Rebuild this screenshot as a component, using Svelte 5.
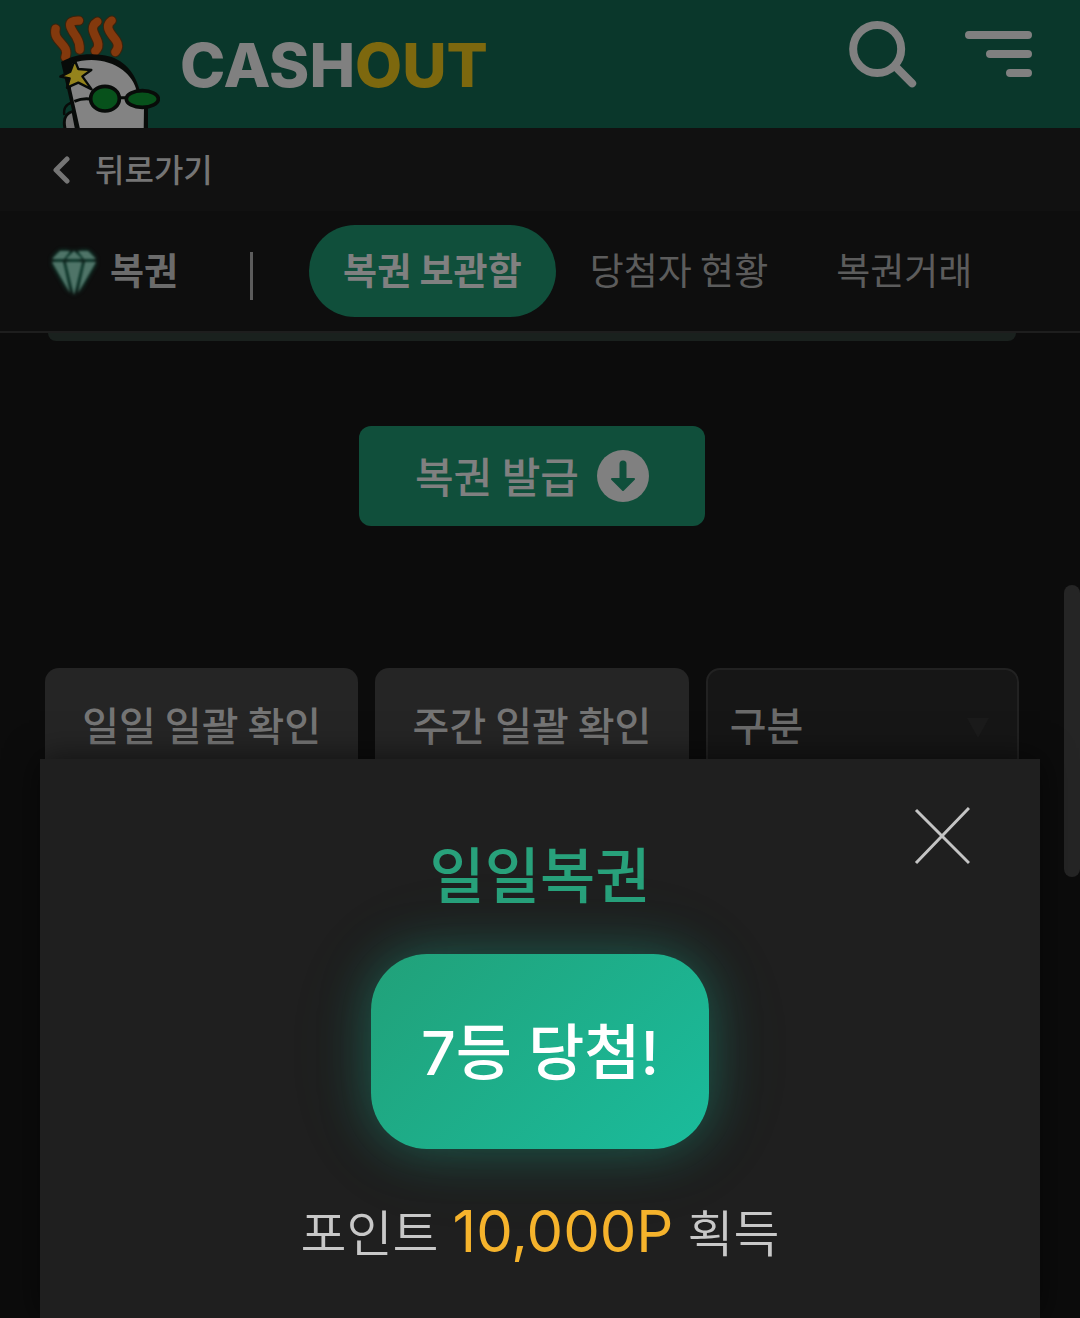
<script lang="ts">
	const tabs = ['복권 보관함', '당첨자 현황', '복권거래'];
	const types = ['구분', '일일', '주간'];

	let activeTab = $state(0);
	let type = $state('구분');
	let open = $state(true);
</script>

<svelte:head>
	<title>CASHOUT</title>
</svelte:head>

<div class="page">
	<header class="header">
		<a class="brand" href="/">
			<svg class="mascot" viewBox="60 45 330 339" aria-hidden="true">
				<g fill="none" stroke-linecap="round" stroke-linejoin="round">
					<g stroke="#3a230d" stroke-width="31">
						<path d="M77 86C66 126 122 132 106 172" />
						<path d="M147 62C100 60 127 92 139 111C148 126 150 137 149 149" />
						<path d="M202 65C175 82 196 105 203 124C208 139 203 147 196 153" />
						<path d="M245 62C221 79 243 102 258 121C268 136 263 148 256 156" />
					</g>
					<g stroke="#83390d" stroke-width="25">
						<path d="M77 86C66 126 122 132 106 172" />
						<path d="M147 62C100 60 127 92 139 111C148 126 150 137 149 149" />
						<path d="M202 65C175 82 196 105 203 124C208 139 203 147 196 153" />
						<path d="M245 62C221 79 243 102 258 121C268 136 263 148 256 156" />
					</g>
				</g>
				<path d="M106 390C98 358 105 340 129 334L140 390Z" fill="#737373" stroke="#080b09" stroke-width="9" />
				<path d="M103 345C99 323 108 313 126 307" fill="none" stroke="#080b09" stroke-width="7" />
				<path d="M93 186L140 392H354V318L328 267C312 208 270 170 216 165C170 158 128 165 93 186Z" fill="#080b09" />
				<path d="M126 190C184 170 240 182 278 210C300 227 314 249 319 270L320 312L342 322L341 392H151L123 266Z" fill="#838383" />
				<path d="M133 304Q160 293 186 298M268 293H297" fill="none" stroke="#080b09" stroke-width="9" />
				<ellipse cx="225" cy="296" rx="43" ry="37" fill="#07511b" stroke="#080b09" stroke-width="11" />
				<ellipse cx="337" cy="297" rx="48" ry="25" fill="#07511b" stroke="#080b09" stroke-width="11" />
				<path d="M134 180L145 207L184 210L157 229L185 268L145 248L111 263L119 235L91 230L121 215Z" fill="#94831c" stroke="#080b09" stroke-width="7" stroke-linejoin="round" />
			</svg>
			<span class="wordmark">CASH<span class="gold">OUT</span></span>
		</a>
		<div class="actions">
			<button class="icon-btn" type="button" aria-label="검색">
				<svg width="69" height="68" viewBox="54 60 206 204" fill="none" stroke="#808080" stroke-width="24" stroke-linecap="round">
					<circle cx="141" cy="147" r="72" />
					<path d="M196 200L246 250" />
				</svg>
			</button>
			<button class="icon-btn" type="button" aria-label="메뉴">
				<svg width="67" height="48" viewBox="0 0 67 48" fill="none" stroke="#808080" stroke-width="8" stroke-linecap="round">
					<path d="M4 5H63M25 24H63M45 43H63" />
				</svg>
			</button>
		</div>
	</header>

	<div class="back-bar">
		<a class="back" href="/">
			<svg width="18" height="28" viewBox="0 0 18 28" fill="none" stroke="#757575" stroke-width="5" stroke-linecap="round" stroke-linejoin="round">
				<path d="M15 3L4 14L15 25" />
			</svg>
			<span class="label">뒤로가기</span>
		</a>
	</div>

	<nav class="nav">
		<div class="section">
			<svg class="gem" width="48" height="52" viewBox="0 0 48 52" aria-hidden="true">
				<g fill="#4f7468">
					<path d="M10 4H20L14 12H2Z" />
					<path d="M24 4L32 12H16Z" />
					<path d="M28 4H38L46 12H34Z" />
					<path d="M2 15H13L20 46Z" />
					<path d="M16 15H32L24 48Z" />
					<path d="M35 15H46L28 46Z" />
				</g>
			</svg>
			<strong class="label">복권</strong>
		</div>
		<span class="divider"></span>
		<div class="tabs">
			{#each tabs as tab, i}
				<button class="tab" class:active={activeTab === i} type="button" onclick={() => (activeTab = i)}>{tab}</button>
			{/each}
		</div>
	</nav>

	<main class="content">
		<div class="card-end"></div>
		<button class="issue" type="button">
			<span class="label">복권 발급</span>
			<svg width="52" height="52" viewBox="0 0 52 52" aria-hidden="true">
				<circle cx="26" cy="26" r="26" fill="#808080" />
				<path d="M26 14V32" stroke="#104f3b" stroke-width="7" stroke-linecap="round" />
				<path d="M15 29H37L26 40Z" fill="#104f3b" stroke="#104f3b" stroke-width="2" stroke-linejoin="round" />
			</svg>
		</button>
		<div class="filters">
			<button class="filter" type="button">일일 일괄 확인</button>
			<button class="filter" type="button">주간 일괄 확인</button>
			<div class="select-wrap">
				<select class="select" aria-label="구분" bind:value={type}>
					{#each types as t}
						<option>{t}</option>
					{/each}
				</select>
				<svg class="caret" width="22" height="20" viewBox="0 0 22 20" aria-hidden="true">
					<path d="M0 0H22L11 20Z" fill="#1b1b1b" />
				</svg>
			</div>
		</div>
	</main>

	<div class="scroll-thumb"></div>

	{#if open}
		<div class="overlay">
			<div class="modal" role="dialog" aria-labelledby="modal-title">
				<button class="close" type="button" aria-label="닫기" onclick={() => (open = false)}>
					<svg width="56" height="58" viewBox="0 0 56 58" fill="none" stroke="#c4c4c4" stroke-width="3">
						<path d="M2 3L55 56M55 1L2 56" />
					</svg>
				</button>
				<h2 id="modal-title">일일복권</h2>
				<div class="prize">7등 당첨!</div>
				<p class="points">포인트 <span class="amount">10,000P</span> 획득</p>
			</div>
		</div>
	{/if}
</div>

<style>
	:global(body) {
		background: #0c0c0c;
	}

	.page {
		position: relative;
		min-height: 100vh;
		overflow: hidden;
		background: #0c0c0c;
		color: #6b6b6b;
		font-family: "Noto Sans CJK KR", sans-serif;
	}

	button,
	select {
		margin: 0;
		padding: 0;
		border: 0;
		background: none;
		color: inherit;
		font-family: inherit;
		cursor: pointer;
	}

	svg {
		display: block;
		flex: none;
	}

	a {
		color: inherit;
		text-decoration: none;
	}

	.label {
		padding-bottom: 4px;
	}

	.header {
		display: flex;
		justify-content: space-between;
		height: 128px;
		padding: 0 48px 0 50px;
		background: #0a372b;
	}

	.brand {
		display: flex;
		align-items: center;
		gap: 20px;
	}

	.mascot {
		width: 110px;
		height: 113px;
		align-self: flex-end;
	}

	.wordmark {
		padding-top: 2px;
		color: #808080;
		font-family: Inter, sans-serif;
		font-size: 61px;
		font-weight: 800;
		line-height: 1;
	}

	.gold {
		color: #7d680e;
	}

	.actions {
		display: flex;
		align-items: center;
		gap: 48px;
		padding-bottom: 20px;
	}

	.back-bar {
		display: flex;
		align-items: center;
		height: 83px;
		padding: 0 52px;
		background: #111;
	}

	.back {
		display: flex;
		align-items: center;
		gap: 25px;
		color: #757575;
		font-size: 32px;
		font-weight: 500;
	}

	.nav {
		display: flex;
		align-items: center;
		height: 120px;
		padding: 0 50px;
		border-bottom: 2px solid #1e1e1e;
		background: #0e0e0e;
		font-size: 37px;
		white-space: nowrap;
	}

	.section {
		display: flex;
		align-items: center;
		gap: 12px;
	}

	.gem {
		margin-top: 4px;
		filter: drop-shadow(0 0 2px #14614a) blur(1px);
	}

	.divider {
		width: 3px;
		height: 48px;
		margin: 10px 56px 0 72px;
		background: #5c5c5c;
	}

	.tabs {
		display: flex;
	}

	.tab {
		height: 92px;
		padding: 0 34px 4px;
		border-radius: 46px;
		color: #5c5c5c;
		font-size: 37px;
		font-weight: 400;
	}

	.tab.active {
		background: #104f3b;
		color: #808080;
		font-weight: 700;
	}

	.content {
		display: flex;
		flex-direction: column;
		align-items: center;
		padding: 0 61px 0 45px;
	}

	.card-end {
		align-self: stretch;
		height: 8px;
		margin: 0 3px 85px;
		border-radius: 0 0 16px 16px;
		background: #1a211e;
	}

	.issue {
		display: flex;
		align-items: center;
		gap: 18px;
		height: 100px;
		margin-bottom: 142px;
		padding: 0 56px;
		border-radius: 12px;
		background: #104f3b;
		color: #808080;
		font-size: 42px;
		font-weight: 500;
	}

	.filters {
		display: grid;
		grid-template-columns: repeat(3, 1fr);
		gap: 17px;
		align-self: stretch;
	}

	.filter,
	.select {
		width: 100%;
		height: 114px;
		border-radius: 14px;
		font-size: 40px;
		font-weight: 500;
	}

	.filter {
		padding-bottom: 2px;
		background: #252525;
		color: #757575;
	}

	.select-wrap {
		position: relative;
	}

	.select {
		appearance: none;
		padding: 0 22px 2px;
		border: 2px solid #222;
		background: #161616;
	}

	.caret {
		position: absolute;
		top: 50px;
		right: 30px;
		pointer-events: none;
	}

	.scroll-thumb {
		position: absolute;
		top: 585px;
		right: 0;
		width: 16px;
		height: 292px;
		border-radius: 8px;
		background: #252525;
	}

	.overlay {
		position: absolute;
		inset: 0;
		display: flex;
		align-items: flex-end;
		padding: 0 40px;
	}

	.modal {
		position: relative;
		display: flex;
		flex: 1;
		flex-direction: column;
		align-items: center;
		padding: 68px 0 39px;
		background: #1f1f1f;
		box-shadow: 0 0 32px rgba(0, 0, 0, 0.6);
	}

	.close {
		position: absolute;
		top: 48px;
		right: 70px;
	}

	h2 {
		margin: 0 0 37px;
		color: #28a17b;
		font-size: 60px;
		font-weight: 500;
		line-height: 90px;
	}

	.prize {
		padding: 54px 50px 51px;
		border-radius: 56px;
		background: linear-gradient(135deg, #21a179, #1abc9c);
		box-shadow: 0 0 50px rgba(26, 188, 156, 0.35), 0 0 100px rgba(26, 188, 156, 0.08);
		color: #fff;
		font-family: Inter, "Noto Sans CJK KR", sans-serif;
		font-size: 61px;
		font-weight: 500;
		line-height: 90px;
	}

	.points {
		margin: 37px 0 0;
		color: #c8c8c8;
		font-family: Inter, "Noto Sans CJK KR", sans-serif;
		font-size: 50px;
		font-weight: 350;
		line-height: 90px;
	}

	.amount {
		color: #f5b32c;
		font-size: 58px;
		font-weight: 400;
	}
</style>
